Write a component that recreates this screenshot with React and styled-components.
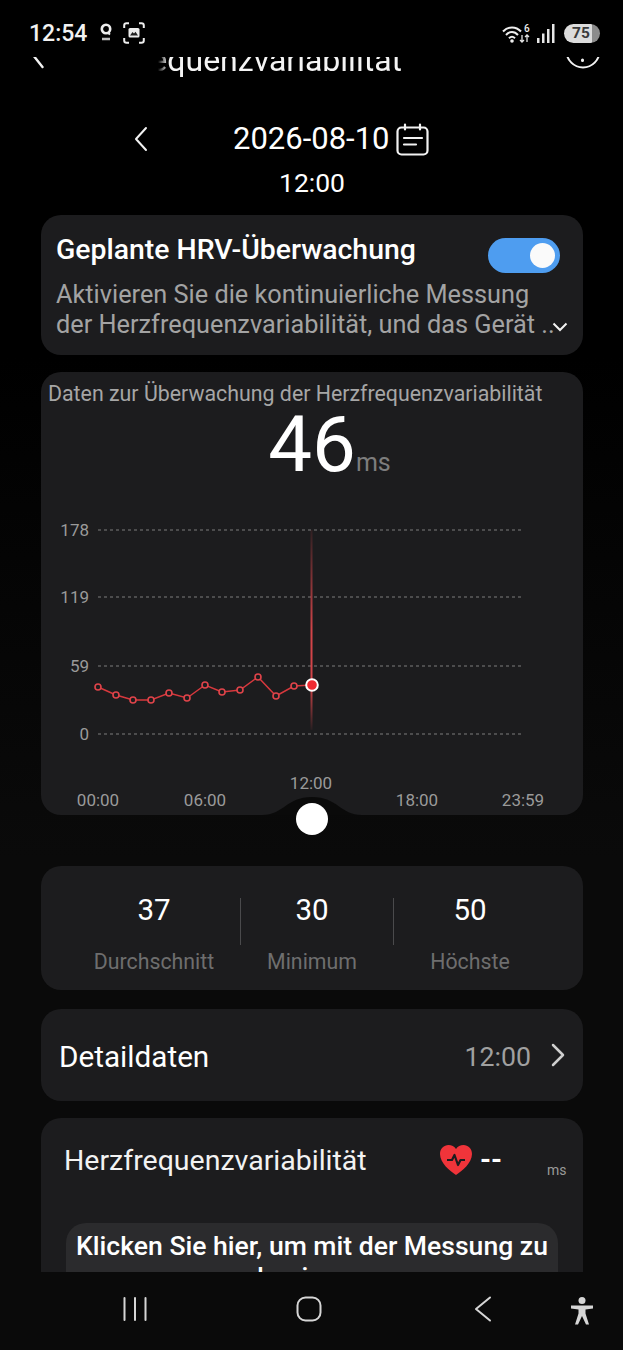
import * as React from 'react';
import styled, { createGlobalStyle } from 'styled-components';

const GlobalStyle = createGlobalStyle`
  html, body {
    margin: 0;
    padding: 0;
    background: #000;
  }
  * {
    box-sizing: border-box;
  }
`;

const Page = styled.div`
  display: flex;
  flex-direction: column;
  width: 623px;
  height: 1350px;
  overflow: hidden;
  background: #000;
  color: #fff;
  font-family: Roboto, "Liberation Sans", sans-serif;
`;

const StatusBar = styled.div`
  display: flex;
  align-items: center;
  justify-content: space-between;
  flex: none;
  height: 57px;
  padding: 9px 23px 0 29px;
`;

const StatusLeft = styled.div`
  display: flex;
  align-items: center;
`;

const StatusRight = styled.div`
  display: flex;
  align-items: center;
`;

const Clock = styled.span`
  width: 71px;
  font-size: 23px;
  font-weight: 500;
  color: #f2f2f2;
`;

const StatusIcon = styled.svg`
  display: block;
  margin-left: ${(p) => p.$left || 0}px;
`;

const Battery = styled.div`
  display: flex;
  align-items: center;
  justify-content: center;
  width: 36px;
  height: 19px;
  margin-left: 9px;
  padding-right: 2px;
  border-radius: 10px;
  background: linear-gradient(90deg, #dcdcdc 78%, #8c8c8c 78%);
  font-size: 15.5px;
  font-weight: 700;
  color: #3a3a3a;
`;

const Scroll = styled.div`
  flex: 1;
  min-height: 0;
  overflow: hidden;
  padding: 0 40px 0 41px;
  background: linear-gradient(#000 0, #000 300px, #0a0a0a 800px);
`;

const Header = styled.div`
  display: flex;
  align-items: flex-end;
  height: 21px;
  margin: 0 -23px 0 -21px;
  overflow: hidden;
`;

const HeaderIcon = styled.svg`
  flex: none;
  margin: 0 ${(p) => p.$right || 0}px ${(p) => p.$bottom}px ${(p) => p.$left || 0}px;
`;

const TitleClip = styled.div`
  display: flex;
  justify-content: flex-end;
  width: 244px;
  margin: 0 auto 0 101px;
  overflow: hidden;
  white-space: nowrap;
  font-size: 32px;
  line-height: 36px;
  color: #f4f4f4;
  mask-image: linear-gradient(90deg, transparent 0, #000 10px);
`;

const DateRow = styled.div`
  display: flex;
  align-items: center;
  height: 40px;
  margin-top: 41px;
  padding-left: 92px;
`;

const DateText = styled.span`
  margin: -1px 6px 0 84px;
  font-size: 31px;
  color: #fff;
`;

const TimeText = styled.div`
  height: 30px;
  margin-top: 9px;
  font-size: 26.500px;
  line-height: 30px;
  text-align: center;
`;

const Card = styled.section`
  position: relative;
  width: 542px;
  height: ${(p) => p.$height}px;
  margin-top: ${(p) => p.$top}px;
  border-radius: 20px;
  background: #1c1c1e;
`;

const MonitorCard = styled(Card)`
  padding: 17px 15px 0;
`;

const MonitorHead = styled.div`
  display: flex;
  align-items: flex-start;
  justify-content: space-between;
  padding-right: 8px;
`;

const MonitorTitle = styled.h2`
  margin: 0;
  font-size: 28.400px;
  font-weight: 500;
  line-height: 36px;
  white-space: nowrap;
`;

const Toggle = styled.div`
  display: flex;
  align-items: center;
  justify-content: flex-end;
  width: 72px;
  height: 35px;
  margin-top: 6px;
  padding-right: 5px;
  border-radius: 18px;
  background: #4e9df0;
`;

const Knob = styled.div`
  width: 25px;
  height: 25px;
  border-radius: 50%;
  background: #fafafa;
`;

const MonitorText = styled.p`
  margin: 7px 0 0;
  font-size: 25.300px;
  line-height: 30px;
  white-space: nowrap;
  color: #a3a3a3;
`;

const ExpandIcon = styled.svg`
  position: absolute;
  right: 15px;
  bottom: 23px;
`;

const ChartCard = styled(Card)`
  padding-top: 9px;
`;

const Caption = styled.div`
  padding-left: 7px;
  font-size: 21.350px;
  line-height: 26px;
  white-space: nowrap;
  color: #a6a6a6;
`;

const Reading = styled.div`
  display: flex;
  align-items: baseline;
  justify-content: center;
  height: 88px;
  padding-left: 35px;
`;

const ReadingValue = styled.span`
  margin-top: -6px;
  font-size: 78px;
  line-height: 88px;
`;

const ReadingUnit = styled.span`
  font-size: 25px;
  color: #7d7d7d;
`;

const ChartSvg = styled.svg`
  display: block;
`;

const AxisText = styled.text`
  font-size: 17px;
  fill: #9a9a9a;
`;

const StatRow = styled(Card)`
  display: flex;
  align-items: flex-start;
  padding: 22px 0 0 27px;
`;

const Stat = styled.div`
  display: flex;
  flex-direction: column;
  align-items: center;
  width: ${(p) => p.$width}px;
  padding-right: ${(p) => p.$shift || 0}px;
`;

const StatDivider = styled.div`
  width: 1px;
  height: 47px;
  margin-top: 10px;
  background: #4a4a4c;
`;

const StatValue = styled.div`
  font-size: 29.500px;
  line-height: 44px;
`;

const StatLabel = styled.div`
  margin-top: 16px;
  font-size: 21.300px;
  line-height: 28px;
  white-space: nowrap;
  color: #6e6e6e;
`;

const DetailRow = styled(Card)`
  display: flex;
  align-items: center;
  padding: 0 17px 0 18px;
`;

const DetailLabel = styled.span`
  flex: 1;
  margin-top: 2px;
  font-size: 29.700px;
`;

const DetailValue = styled.span`
  margin: 4px 19px 0 0;
  font-size: 26.700px;
  color: #a0a0a0;
`;

const MeasureCard = styled(Card)`
  padding: 0 25px;
  border-radius: 20px 20px 0 0;
`;

const MeasureHead = styled.div`
  display: flex;
  align-items: center;
  height: 84px;
  margin-right: -16px;
`;

const MeasureTitle = styled.span`
  width: 376px;
  margin-left: -2px;
  font-size: 28.500px;
  white-space: nowrap;
  color: #f2f2f2;
`;

const Dash = styled.span`
  width: 67px;
  margin-left: 8px;
  font-size: 28px;
  font-weight: 700;
  line-height: 32px;
`;

const SmallUnit = styled.span`
  margin-top: 20px;
  font-size: 14px;
  color: #9a9a9a;
`;

const StartButton = styled.div`
  width: 492px;
  margin-top: 21px;
  padding: 7px 6px 0;
  border-radius: 20px;
  background: #2b2b2d;
  font-size: 26.560px;
  font-weight: 500;
  line-height: 31px;
  text-align: center;
`;

const NavBar = styled.div`
  display: grid;
  grid-template-columns: 147px 175px 170px 102px;
  align-items: center;
  flex: none;
  height: 78px;
  padding-bottom: 4px;
  background: #0a0a0a;
`;

const NavSlot = styled.div`
  display: flex;
  justify-content: flex-end;
  margin-top: ${(p) => p.$top || 0}px;
`;

const Handle = styled.div`
  position: absolute;
  bottom: -20px;
  left: 255px;
  width: 32px;
  height: 32px;
  border-radius: 50%;
  background: #fff;
`;

const points = [
  [98, 687], [116, 695], [133, 700], [151, 700], [169, 693], [187, 698], [205, 685],
  [222, 692], [240, 690], [258, 677], [276, 696], [294, 686],
];

const gridLines = [
  { y: 530, label: '178' },
  { y: 597, label: '119' },
  { y: 666, label: '59' },
  { y: 734, label: '0' },
];

const hours = [
  { x: 98, label: '00:00' },
  { x: 205, label: '06:00' },
  { x: 417, label: '18:00' },
  { x: 523, label: '23:59' },
];

const Chart = () => (
  <ChartSvg width="542" height="320" viewBox="41 495 542 320">
    <defs>
      <linearGradient id="cursor" x1="0" y1="0" x2="0" y2="1">
        <stop offset="0" stopColor="#e5484d" stopOpacity="0.1" />
        <stop offset="0.5" stopColor="#e5484d" stopOpacity="0.9" />
        <stop offset="0.78" stopColor="#e5484d" stopOpacity="0.9" />
        <stop offset="1" stopColor="#e5484d" stopOpacity="0.05" />
      </linearGradient>
    </defs>
    {gridLines.map((line) => (
      <g key={line.y}>
        <line x1="98" x2="523" y1={line.y} y2={line.y} stroke="#7c7c7c" strokeDasharray="3 3" />
        <AxisText x="89" y={line.y + 6} textAnchor="end">{line.label}</AxisText>
      </g>
    ))}
    <rect x="310.500" y="530" width="2" height="200" fill="url(#cursor)" />
    <polyline
      points={[...points, [312, 685]].map((p) => p.join(',')).join(' ')}
      fill="none"
      stroke="#d6383d"
      strokeWidth="1.500"
    />
    {points.map(([x, y]) => (
      <circle key={x} cx={x} cy={y} r="3" fill="#1c1c1e" stroke="#e0444a" strokeWidth="1.600" />
    ))}
    <circle cx="312" cy="685" r="5.800" fill="#f02a32" stroke="#fff" strokeWidth="2" />
    {hours.map((hour) => (
      <AxisText key={hour.x} x={hour.x} y="806" textAnchor="middle">{hour.label}</AxisText>
    ))}
    <AxisText x="311" y="789" textAnchor="middle">12:00</AxisText>
    <path d="M262 815 C284 815 286 797 312 797 C338 797 340 815 362 815 Z" fill="#0a0a0a" />
  </ChartSvg>
);

const Chevron = ({ width, height, d, color = '#f2f2f2', sw = 2 }) => (
  <svg width={width} height={height} viewBox={`0 0 ${width} ${height}`} fill="none">
    <path d={d} stroke={color} strokeWidth={sw} strokeLinecap="round" strokeLinejoin="round" />
  </svg>
);

export default function App() {
  return (
    <Page>
      <GlobalStyle />
      <StatusBar>
        <StatusLeft>
          <Clock>12:54</Clock>
          <StatusIcon width="12" height="20" viewBox="0 0 12 20" fill="none">
            <circle cx="6" cy="6" r="4.200" stroke="#ededed" strokeWidth="2.600" />
            <path d="M7.500 9.500 L10 11.500" stroke="#ededed" strokeWidth="2" />
            <path d="M2 16h8" stroke="#bdbdbd" strokeWidth="2.500" />
          </StatusIcon>
          <StatusIcon $left={11} width="22" height="22" viewBox="0 0 22 22" fill="none">
            <path d="M1.200 6V3.500Q1.200 1.200 3.500 1.200H6M16 1.200H18.500Q20.800 1.200 20.800 3.500V6M20.800 16V18.500Q20.800 20.800 18.500 20.800H16M6 20.800H3.500Q1.200 20.800 1.200 18.500V16" stroke="#ededed" strokeWidth="2" />
            <rect x="5.500" y="6" width="11" height="9.500" rx="1.500" fill="#ededed" />
            <path d="M7 13.500 L9.500 10 L11 11.500 L12.500 9.800 L15 13.500 Z" fill="#222" />
          </StatusIcon>
        </StatusLeft>
        <StatusRight>
          <StatusIcon width="28" height="19" viewBox="0 0 28 19" fill="none">
            <path d="M1 7.500C6 2 14 2 19 7.500M4 11C7.500 7 12.500 7 16 11M7 14.200C8.800 12.500 11.200 12.500 13 14.200" stroke="#eee" strokeWidth="2" />
            <circle cx="10" cy="17" r="1.800" fill="#eee" />
            <path d="M20 11v7m-2-2 2 2 2-2M25 18v-7m-2 2 2-2 2 2" stroke="#e4e4e4" strokeWidth="1.300" />
            <text x="22" y="8" fontSize="10" fontWeight="500" fill="#eee" fontFamily="Roboto">6</text>
          </StatusIcon>
          <StatusIcon $left={7} width="18" height="20" viewBox="0 0 18 20" fill="#e6e6e6">
            <rect x="0" y="15" width="2.500" height="5" />
            <rect x="5" y="10.500" width="2.500" height="9.500" />
            <rect x="10" y="6" width="2.500" height="14" />
            <rect x="15" y="1" width="2.500" height="19" />
          </StatusIcon>
          <Battery>75</Battery>
        </StatusRight>
      </StatusBar>

      <Scroll>
        <Header>
          <HeaderIcon $left={13} $bottom={9} width="24" height="40" viewBox="0 0 24 40" fill="none">
            <path d="M0 26 L9.500 38" stroke="#f2f2f2" strokeWidth="2.400" strokeLinecap="round" />
          </HeaderIcon>
          <TitleClip>Herzfrequenzvariabilität</TitleClip>
          <HeaderIcon $right={5} $bottom={5} width="36" height="40" viewBox="0 0 36 40" fill="none">
            <circle cx="18" cy="18" r="16.500" stroke="#f2f2f2" strokeWidth="2" />
            <path d="M17.500 20.500v1.500M17.500 27v.5" stroke="#f2f2f2" strokeWidth="3" strokeLinecap="round" />
          </HeaderIcon>
        </Header>

        <DateRow>
          <Chevron width="16" height="26" d="M13 2 L3 13 L13 24" />
          <DateText>2026-08-10</DateText>
          <svg width="33" height="33" viewBox="0 0 33 33" fill="none">
            <rect x="1.500" y="4.500" width="30" height="27" rx="4" stroke="#f2f2f2" strokeWidth="2.200" />
            <path d="M9 1.500v5M24 1.500v5M8 15h18M8 21.500h12" stroke="#f2f2f2" strokeWidth="2.200" strokeLinecap="round" />
          </svg>
        </DateRow>
        <TimeText>12:00</TimeText>

        <MonitorCard $height={140} $top={17}>
          <MonitorHead>
            <MonitorTitle>Geplante HRV-Überwachung</MonitorTitle>
            <Toggle><Knob /></Toggle>
          </MonitorHead>
          <MonitorText>
            Aktivieren Sie die kontinuierliche Messung<br />
            der Herzfrequenzvariabilität, und das Gerät ..
          </MonitorText>
          <ExpandIcon width="16" height="10" viewBox="0 0 16 10" fill="none">
            <path d="M1.500 1.500 L8 8 L14.500 1.500" stroke="#f2f2f2" strokeWidth="2" />
          </ExpandIcon>
        </MonitorCard>

        <ChartCard $height={443} $top={17}>
          <Caption>Daten zur Überwachung der Herzfrequenzvariabilität</Caption>
          <Reading>
            <ReadingValue>46</ReadingValue>
            <ReadingUnit>ms</ReadingUnit>
          </Reading>
          <Chart />
          <Handle />
        </ChartCard>

        <StatRow $height={124} $top={51}>
          <Stat $width={172}>
            <StatValue>37</StatValue>
            <StatLabel>Durchschnitt</StatLabel>
          </Stat>
          <StatDivider />
          <Stat $width={152} $shift={10}>
            <StatValue>30</StatValue>
            <StatLabel>Minimum</StatLabel>
          </Stat>
          <StatDivider />
          <Stat $width={152}>
            <StatValue>50</StatValue>
            <StatLabel>Höchste</StatLabel>
          </Stat>
        </StatRow>

        <DetailRow $height={92} $top={19}>
          <DetailLabel>Detaildaten</DetailLabel>
          <DetailValue>12:00</DetailValue>
          <Chevron width="16" height="24" d="M3 2 L13 12 L3 22" color="#cfcfcf" sw={2.500} />
        </DetailRow>

        <MeasureCard $height={200} $top={17}>
          <MeasureHead>
            <MeasureTitle>Herzfrequenzvariabilität</MeasureTitle>
            <svg width="32" height="30" viewBox="0 0 32 30">
              <path d="M16 30 C10 26 0 18 0 9 C0 3.500 4 0 8.500 0 C11.500 0 14.500 1.500 16 4 C17.500 1.500 20.500 0 23.500 0 C28 0 32 3.500 32 9 C32 18 22 26 16 30 Z" fill="#f0343a" />
              <path d="M7 15 H12 L14.500 10 L18 20 L20.500 15 H25" fill="none" stroke="#1c1c1e" strokeWidth="2.200" strokeLinejoin="round" />
            </svg>
            <Dash>--</Dash>
            <SmallUnit>ms</SmallUnit>
          </MeasureHead>
          <StartButton>
            Klicken Sie hier, um mit der Messung zu beginnen
          </StartButton>
        </MeasureCard>
      </Scroll>

      <NavBar>
        <NavSlot>
          <svg width="24" height="24" viewBox="0 0 24 24" fill="none">
            <path d="M1.500 1v22M12 1v22M22.500 1v22" stroke="#d6d6d6" strokeWidth="2" strokeLinecap="round" />
          </svg>
        </NavSlot>
        <NavSlot>
          <svg width="26" height="26" viewBox="0 0 26 26" fill="none">
            <rect x="1.500" y="1.500" width="23" height="23" rx="8" stroke="#d6d6d6" strokeWidth="2" />
          </svg>
        </NavSlot>
        <NavSlot>
          <Chevron width="18" height="26" d="M16 1.500 L2 13 L16 24.500" color="#d6d6d6" />
        </NavSlot>
        <NavSlot $top={4}>
          <svg width="24" height="28" viewBox="0 0 24 28" fill="#d6d6d6">
            <circle cx="12" cy="3.500" r="3.500" />
            <path d="M1 8.500 H23 V11.500 L15.500 12.500 V16.500 L19 27.500 H16 L12 19 L8 27.500 H5 L8.500 16.500 V12.500 L1 11.500 Z" />
          </svg>
        </NavSlot>
      </NavBar>
    </Page>
  );
}
